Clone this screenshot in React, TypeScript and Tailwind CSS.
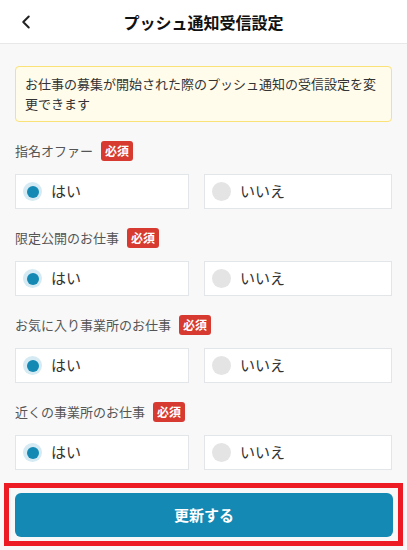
import { useState } from 'react'

const sections = [
  { key: 'offer', label: '指名オファー' },
  { key: 'limited', label: '限定公開のお仕事' },
  { key: 'favorite', label: 'お気に入り事業所のお仕事' },
  { key: 'nearby', label: '近くの事業所のお仕事' },
]

function Radio({ checked }: { checked: boolean }) {
  if (checked) {
    return (
      <span className="w-[19px] h-[19px] rounded-full bg-[#d5eaf3] flex items-center justify-center shrink-0">
        <span className="w-[12px] h-[12px] rounded-full bg-[#1489b3]" />
      </span>
    )
  }
  return <span className="w-[19px] h-[19px] rounded-full bg-[#e4e4e4] shrink-0" />
}

export default function App() {
  const [values, setValues] = useState<Record<string, boolean>>({
    offer: true,
    limited: true,
    favorite: true,
    nearby: true,
  })

  return (
    <div className="w-full min-h-[550px] bg-[#f8f8f8] text-[#333] font-['Noto_Sans_CJK_JP','Noto_Sans',sans-serif]">
      <header className="h-[44px] bg-white border-b border-[#e8e8e8] grid grid-cols-[44px_1fr_44px] items-center">
        <button className="h-[44px] flex items-center pl-[15px]">
          <svg width="22" height="22" viewBox="0 0 24 24" fill="none" stroke="#222" strokeWidth="2.2" strokeLinecap="round" strokeLinejoin="round">
            <path d="m15 18-6-6 6-6" />
          </svg>
        </button>
        <h1 className="text-center text-[16px] font-bold text-[#111]">プッシュ通知受信設定</h1>
        <span />
      </header>

      <main className="px-[15px] pt-[22px]">
        <div className="border border-[#fbe278] bg-[#fffcec] rounded-[4px] px-[9px] py-[7px] text-[13px] leading-[20px] text-[#333]">
          お仕事の募集が開始された際のプッシュ通知の受信設定を変更できます
        </div>

        {sections.map((s) => (
          <section key={s.key} className="mt-[19px]">
            <div className="h-[20px] flex items-center gap-[8px]">
              <span className="text-[13px] text-[#555]">{s.label}</span>
              <span className="bg-[#d63a31] text-white text-[12px] font-bold leading-none rounded-[3px] px-[4px] py-[4px]">必須</span>
            </div>
            <div className="mt-[13px] flex gap-[15px]">
              <button
                className="w-[174px] h-[35px] bg-white border border-[#e3e6e8] flex items-center gap-[9px] pl-[7px] text-[15px] text-[#333]"
                onClick={() => setValues({ ...values, [s.key]: true })}
              >
                <Radio checked={values[s.key]} />
                はい
              </button>
              <button
                className="flex-1 h-[35px] bg-white border border-[#e3e6e8] flex items-center gap-[9px] pl-[7px] text-[15px] text-[#333]"
                onClick={() => setValues({ ...values, [s.key]: false })}
              >
                <Radio checked={!values[s.key]} />
                いいえ
              </button>
            </div>
          </section>
        ))}
      </main>

      <footer className="mt-[13px] mx-[4px] border-[5px] border-[#ed1c24] pl-[6px] pr-[5px] pt-[5px] pb-[4px]">
        <button className="w-full h-[44px] rounded-[6px] bg-[#1489b3] text-white text-[15px] font-bold">
          更新する
        </button>
      </footer>
    </div>
  )
}
